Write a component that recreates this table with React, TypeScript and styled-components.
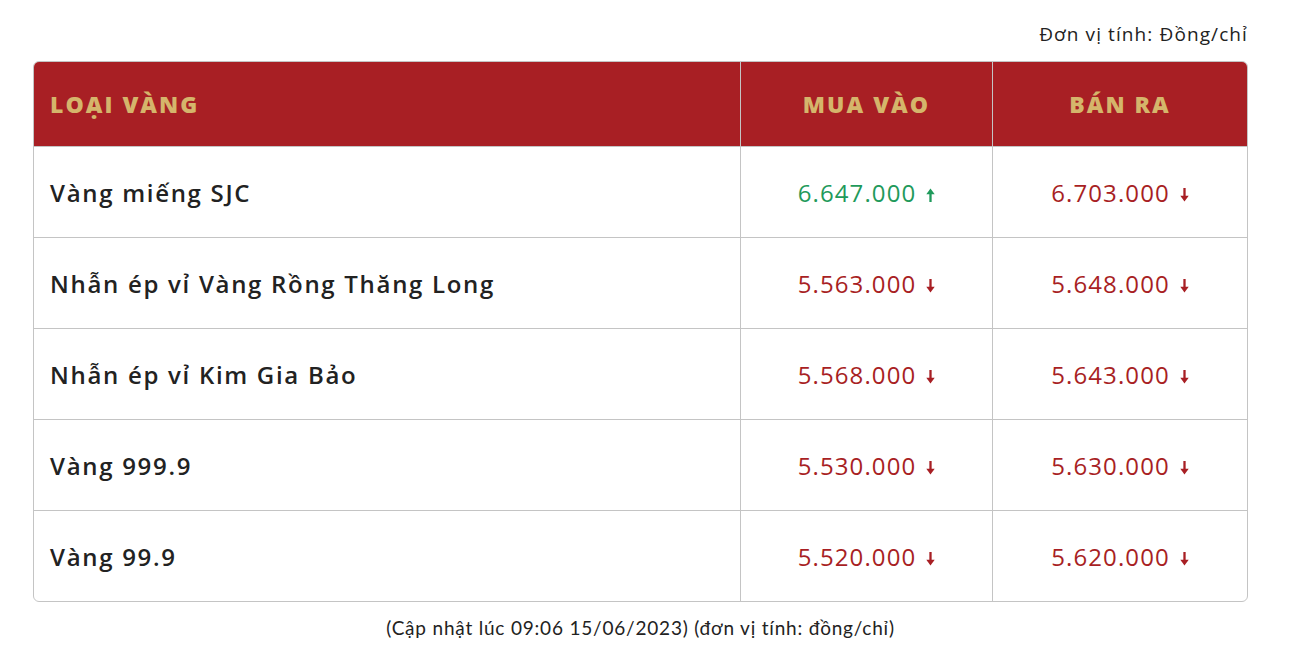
import React from 'react'
import styled, { createGlobalStyle } from 'styled-components'

type Trend = 'up' | 'down'

interface IRow {
  name: string
  buy: string
  buyTrend: Trend
  sell: string
  sellTrend: Trend
}

const rows: IRow[] = [
  { name: 'Vàng miếng SJC', buy: '6.647.000', buyTrend: 'up', sell: '6.703.000', sellTrend: 'down' },
  { name: 'Nhẫn ép vỉ Vàng Rồng Thăng Long', buy: '5.563.000', buyTrend: 'down', sell: '5.648.000', sellTrend: 'down' },
  { name: 'Nhẫn ép vỉ Kim Gia Bảo', buy: '5.568.000', buyTrend: 'down', sell: '5.643.000', sellTrend: 'down' },
  { name: 'Vàng 999.9', buy: '5.530.000', buyTrend: 'down', sell: '5.630.000', sellTrend: 'down' },
  { name: 'Vàng 99.9', buy: '5.520.000', buyTrend: 'down', sell: '5.620.000', sellTrend: 'down' },
]

const colors = {
  red: '#a81f24',
  gold: '#d5b56b',
  green: '#1f9a5b',
  text: '#222222',
  border: '#c4c4c4',
}

const Arrow = ({ trend }: { trend: Trend }) => (
  <ArrowIcon width="9" height="14" viewBox="0 0 9 14" trend={trend}>
    {trend === 'up' ? (
      <>
        <path d="M4.5 14V4.5" stroke="currentColor" strokeWidth="2.3" />
        <path d="M0.3 6.2L4.5 0.6L8.7 6.2Z" fill="currentColor" />
      </>
    ) : (
      <>
        <path d="M4.5 0V9.5" stroke="currentColor" strokeWidth="2.3" />
        <path d="M0.3 7.8L4.5 13.4L8.7 7.8Z" fill="currentColor" />
      </>
    )}
  </ArrowIcon>
)

const Price = ({ value, trend }: { value: string; trend: Trend }) => (
  <PriceText trend={trend}>
    {value}
    <Arrow trend={trend} />
  </PriceText>
)

export default function App() {
  return (
    <>
      <GlobalStyle />
      <Page>
        <Unit>Đơn vị tính: Đồng/chỉ</Unit>
        <Table>
          <thead>
            <tr>
              <HeadCell align="left">LOẠI VÀNG</HeadCell>
              <HeadCell>MUA VÀO</HeadCell>
              <HeadCell>BÁN RA</HeadCell>
            </tr>
          </thead>
          <tbody>
            {rows.map((row, idx) => (
              <tr key={idx}>
                <NameCell>{row.name}</NameCell>
                <PriceCell>
                  <Price value={row.buy} trend={row.buyTrend} />
                </PriceCell>
                <PriceCell>
                  <Price value={row.sell} trend={row.sellTrend} />
                </PriceCell>
              </tr>
            ))}
          </tbody>
        </Table>
        <Caption>(Cập nhật lúc 09:06 15/06/2023) (đơn vị tính: đồng/chỉ)</Caption>
      </Page>
    </>
  )
}

const GlobalStyle = createGlobalStyle`
  body {
    margin: 0;
    background: #ffffff;
    font-family: "Open Sans", "Liberation Sans", sans-serif;
    color: ${colors.text};
  }
`

const Page = styled.div`
  width: 1215px;
  margin-left: 33px;
  padding-top: 21px;
`

const Unit = styled.div`
  text-align: right;
  font-size: 19px;
  letter-spacing: 1.1px;
  line-height: 26px;
  color: #222;
  margin-bottom: 14px;
`

const Table = styled.table`
  width: 100%;
  border-collapse: separate;
  border-spacing: 0;
  border: 1px solid ${colors.border};
  border-radius: 6px;
  overflow: hidden;
  table-layout: fixed;
`

const HeadCell = styled.th<{ align?: 'left' | 'center' }>`
  height: 84px;
  padding: 0 16px;
  background: ${colors.red};
  color: ${colors.gold};
  font-size: 23px;
  font-weight: 800;
  letter-spacing: 2px;
  text-align: ${(props) => props.align || 'center'};
  border-bottom: 1px solid ${colors.border};

  &:first-child {
    width: 674px;
  }
  &:nth-child(2) {
    width: 219px;
  }
  &:not(:last-child) {
    border-right: 1px solid ${colors.border};
  }
`

const BodyCell = styled.td`
  height: 90px;
  padding: 0 16px;
  border-bottom: 1px solid ${colors.border};

  tr:last-child & {
    border-bottom: none;
  }
  &:not(:last-child) {
    border-right: 1px solid ${colors.border};
  }
`

const NameCell = styled(BodyCell)`
  font-size: 24px;
  font-weight: 600;
  letter-spacing: 1.7px;
  color: ${colors.text};
`

const PriceCell = styled(BodyCell)`
  text-align: center;
`

const PriceText = styled.span<{ trend: Trend }>`
  display: inline-flex;
  align-items: center;
  gap: 10px;
  font-size: 24px;
  letter-spacing: 1.1px;
  color: ${(props) => (props.trend === 'up' ? colors.green : colors.red)};
`

const ArrowIcon = styled.svg<{ trend: Trend }>`
  margin-top: 5px;
  color: ${(props) => (props.trend === 'up' ? colors.green : colors.red)};
`

const Caption = styled.div`
  text-align: center;
  margin-top: 14px;
  font-family: Lato, "Open Sans", sans-serif;
  font-weight: 400;
  font-size: 19px;
  letter-spacing: 0.8px;
  color: #222;
`
